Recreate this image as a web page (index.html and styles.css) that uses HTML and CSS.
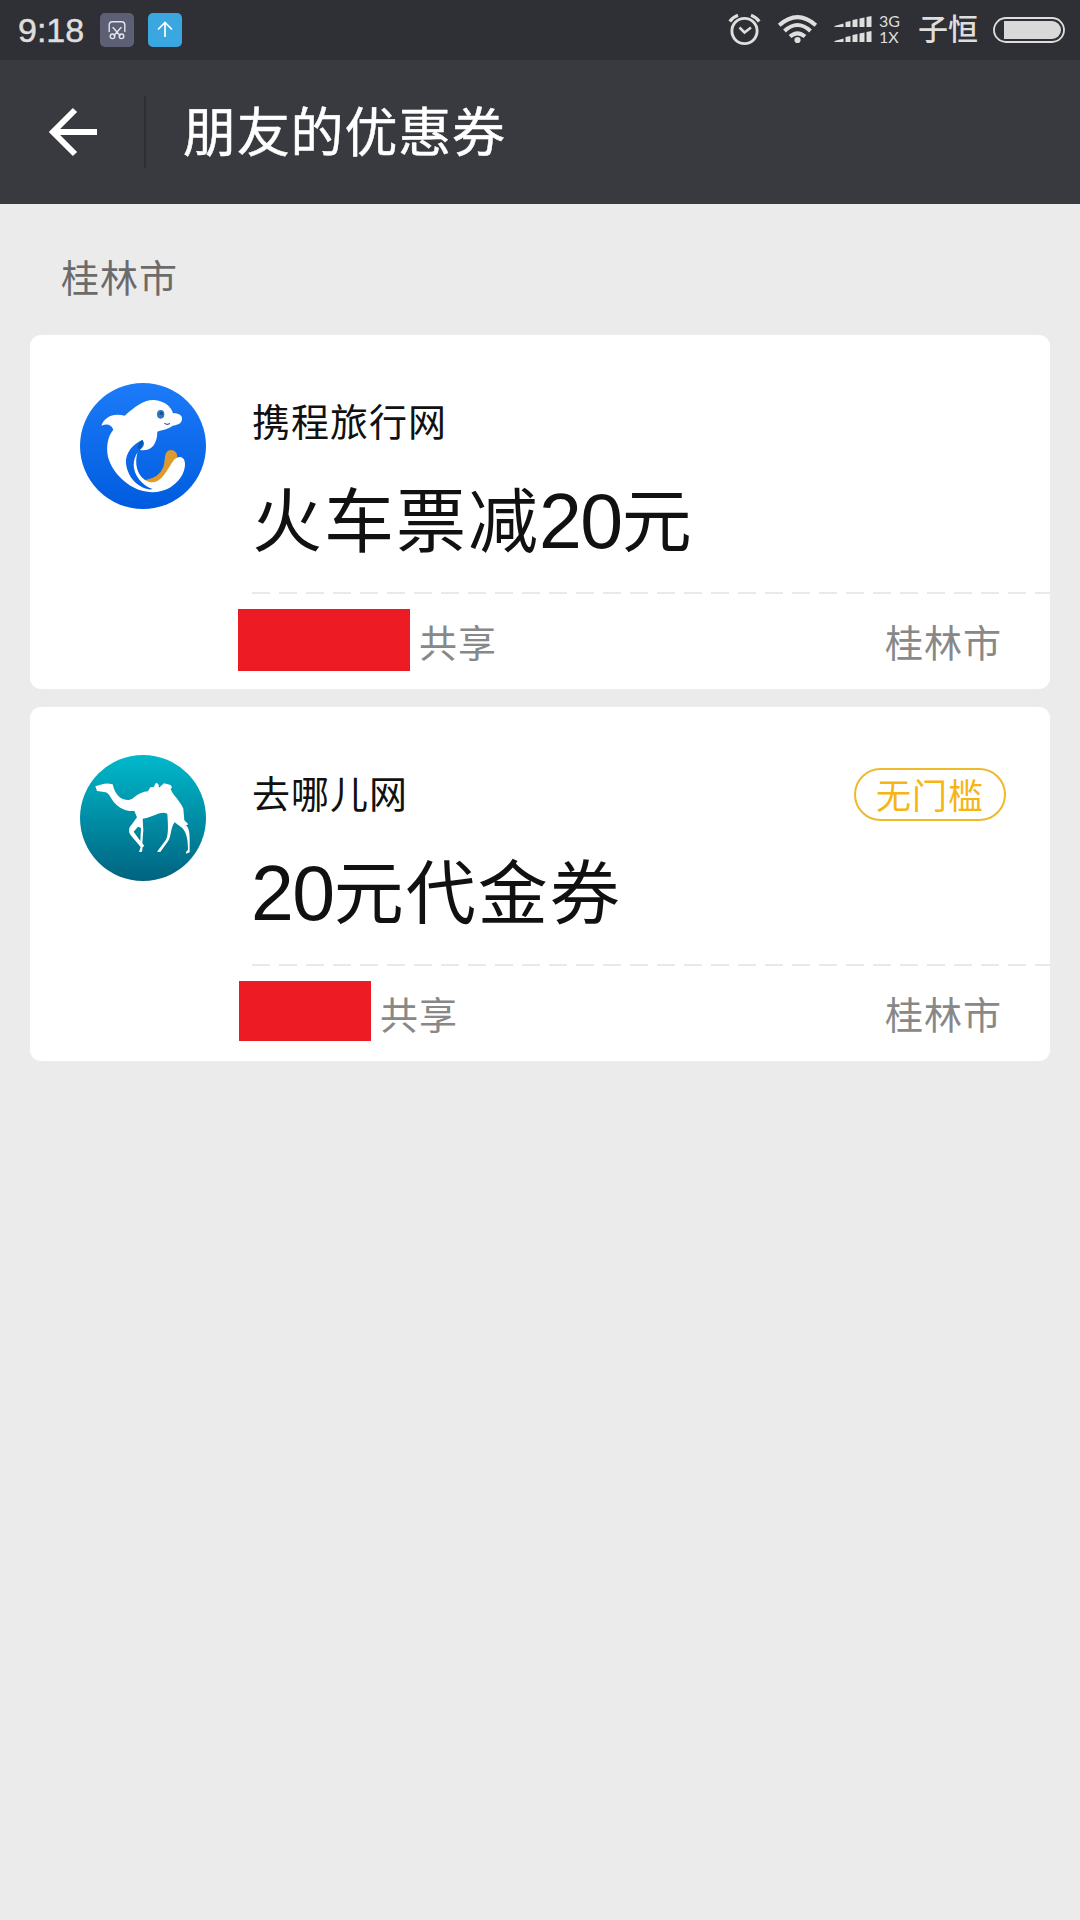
FILE: index.html
```html
<!DOCTYPE html>
<html lang="zh-CN">
<head>
<meta charset="utf-8">
<title>朋友的优惠券</title>
<link rel="stylesheet" href="styles.css">
</head>
<body>
<div class="status">
  <span class="clock">9:18</span>
  <svg class="app-icon" width="34" height="34" viewBox="0 0 34 34">
    <rect width="34" height="34" rx="5" fill="#5d6075"/>
    <g fill="none" stroke="#e4e5ea" stroke-width="1.4" stroke-linecap="round">
      <path d="M9.2 18.5V12Q9.2 8.7 12.500 8.700H21.500Q24.800 8.700 24.800 12V18.500M13 14.500L20 22.500M21 14.500L14 22.500"/>
      <circle cx="12.500" cy="23.300" r="2.300"/><circle cx="21.500" cy="23.300" r="2.300"/>
    </g>
  </svg>
  <svg class="app-icon" width="34" height="34" viewBox="0 0 34 34">
    <rect width="34" height="34" rx="5" fill="#3ba7e0"/>
    <path d="M17 24V10M10 16.500L17 9.500L24 16.500" fill="none" stroke="#fff" stroke-width="1.700"/>
  </svg>
  <svg class="signals" width="144" height="34" viewBox="0 0 144 34">
    <g fill="none" stroke="#dedede">
      <circle cx="16.500" cy="19" r="12.600" stroke-width="2.900"/>
      <path d="M11.500 15.500L16.500 20.500L23 15.500" stroke-width="2.500"/>
      <path d="M1.800 9.500Q5 5 10 3.300M31.200 9.500Q28 5 23 3.300" stroke-width="3.300"/>
      <path d="M51.200 13.300Q69.500 -2.900 87.800 13.300M56.500 19Q69.500 7 82.500 19M62 24.600Q69.500 18 77 24.600" stroke-width="4"/>
    </g>
    <g fill="#dedede">
      <circle cx="69.500" cy="28" r="3.100"/>
      <path d="M106.500 15V14L115.500 11.500V15ZM117.500 15V10L122.500 9V15ZM124.500 15V8L129.500 7V15ZM131.500 15V6.500L136.500 5.500V15ZM138.500 15V5L143.500 4V15Z"/>
      <path d="M106.500 30V29L115.500 26.500V30ZM117.500 30V25L122.500 24V30ZM124.500 30V23L129.500 22V30ZM131.500 30V21.500L136.500 20.500V30ZM138.500 30V20L143.500 19V30Z"/>
    </g>
  </svg>
  <div class="network"><span>3G</span><span>1X</span></div>
  <span class="carrier">子恒</span>
  <svg class="battery" width="72" height="26" viewBox="0 0 72 26">
    <rect x="1" y="1" width="70" height="24" rx="12" fill="none" stroke="#dedede" stroke-width="1.800"/>
    <path d="M11 4H59A9 9 0 0 1 59 22H11Z" fill="#d9d9d9"/>
  </svg>
</div>
<header class="bar">
  <svg class="back" width="50" height="50" viewBox="0 0 50 50"><path d="M48 25H5M26 3L4 25L26 47" fill="none" stroke="#fff" stroke-width="6"/></svg>
  <i class="divider"></i>
  <h1>朋友的优惠券</h1>
</header>
<main>
  <h2 class="city">桂林市</h2>
  <article class="card">
    <svg class="logo" width="126" height="126" viewBox="0 0 378 378">
      <defs><linearGradient id="blue" x2="0" y2="1"><stop stop-color="#1c7bf8"/><stop offset="1" stop-color="#005cdf"/></linearGradient></defs>
      <circle cx="189" cy="189" r="189" fill="url(#blue)"/>
      <path fill="#df9a2d" d="M194 292Q238 284 250 252C258 228 250 202 274 201Q292 204 292 222L275 280L220 320Z"/>
      <path fill="#fff" d="M64 128C72 104 98 88 134 98C164 72 190 50 222 51C252 53 274 70 279 91C296 90 307 97 306 108C305 123 291 126 278 128C264 140 247 139 232 146C232 162 228 177 220 188C210 200 195 204 179 201C192 192 196 180 187 171C158 183 136 210 138 240C140 270 159 299 187 313C202 320 211 320 218 318C186 307 161 276 161 245Q162 224 173 208C163 239 169 283 207 297C244 304 259 263 280 233C294 216 314 218 315 242C316 271 295 298 268 315C243 329 210 331 181 322C142 309 98 272 84 222C78 190 83 160 100 140C93 122 79 122 64 128Z"/>
      <path d="M187 171Q173 177 173 197Q179 196 179 201Q195 181 187 171Z" fill="#0b58b3"/>
      <ellipse cx="242" cy="94" rx="11" ry="13" fill="#2f76bd"/><circle cx="244" cy="91" r="5" fill="#174f92"/>
      <path d="M253 121Q260 127 270 122" fill="none" stroke="#173a76" stroke-width="3"/>
    </svg>
    <div class="content">
      <div class="top"><h3>携程旅行网</h3></div>
      <p class="offer">火车票减<span class="num">20</span>元</p>
      <svg class="dash" width="798" height="2" viewBox="0 0 798 2"><path d="M0 1H798" stroke="#e9e9e9" stroke-width="2" stroke-dasharray="18 9"/></svg>
      <div class="foot"><i class="mask"></i><span class="share">共享</span><span class="place">桂林市</span></div>
    </div>
  </article>
  <article class="card">
    <svg class="logo" width="126" height="126" viewBox="0 0 378 378">
      <defs><linearGradient id="teal" x2="0" y2="1"><stop stop-color="#00b9cb"/><stop offset="1" stop-color="#006380"/></linearGradient></defs>
      <circle cx="189" cy="189" r="189" fill="url(#teal)"/>
      <path fill="#fff" d="M46 94L67 88Q79 83 98 88L102 101C111 125 126 134 144 135C161 137 170 111 204 109L211 97L221 96L228 83L235 87L237 98L252 85L272 90L276 97L272 102C279 122 301 137 310 161L313 196L325 208L318 211C332 222 329 254 329 292L318 296V291L324 284C324 254 320 234 307 219L284 202C270 220 275 246 263 260L241 291L231 290L258 254C265 240 265 220 262 176C241 166 215 190 188 191L190 225L187 265L193 273L188 276L186 290L177 291L182 276L154 243Q143 230 149 217L171 187L163 168C137 170 119 160 104 144C91 130 90 117 77 112L51 108ZM174 215L161 230L181 258L183 219Z"/>
    </svg>
    <div class="content">
      <div class="top"><h3>去哪儿网</h3><span class="tag">无门槛</span></div>
      <p class="offer"><span class="num">20</span>元代金券</p>
      <svg class="dash" width="798" height="2" viewBox="0 0 798 2"><path d="M0 1H798" stroke="#e9e9e9" stroke-width="2" stroke-dasharray="18 9"/></svg>
      <div class="foot"><i class="mask mask-short"></i><span class="share">共享</span><span class="place">桂林市</span></div>
    </div>
  </article>
</main>
</body>
</html>
```
FILE: styles.css
```css
* { box-sizing: border-box; margin: 0; padding: 0; }
body {
  width: 1080px;
  min-height: 1920px;
  background: #ebebeb;
  font-family: "Liberation Sans", "Noto Sans CJK SC", sans-serif;
  color: #111;
}
h1, h2, h3 { font-weight: 400; }
svg { display: block; flex: none; }

.status {
  display: flex;
  height: 60px;
  padding-left: 18px;
  background: #2f3035;
  color: #dedede;
}
.clock { width: 82px; font-size: 34px; line-height: 61px; -webkit-text-stroke: 0.5px #dedede; }
.app-icon { margin: 13px 14px 0 0; }
.signals { margin: 12px 0 0 532px; }
.network {
  display: flex;
  flex-direction: column;
  width: 39px;
  padding-top: 13px;
  margin-left: 7px;
  font: 400 16px/16px Lato, sans-serif;
}
.carrier { width: 70px; font-size: 30px; font-weight: 500; line-height: 60px; white-space: nowrap; }
.battery { margin-top: 17px; margin-left: 5px; }

.bar {
  display: flex;
  align-items: center;
  height: 144px;
  padding-left: 49px;
  background: #393a3f;
  color: #fff;
}
.divider { width: 2px; height: 72px; margin: 0 37px 0 45px; background: #2e2f33; }
.bar h1 { padding-top: 3px; font-size: 53px; line-height: 72px; letter-spacing: 0.8px; -webkit-text-stroke: 0.5px #fff; }

main { padding: 0 30px; }
.city {
  height: 131px;
  padding: 50px 0 0 31px;
  font-size: 38px;
  line-height: 51px;
  letter-spacing: 1px;
  color: #6b6b6b;
}
.card {
  display: flex;
  height: 354px;
  margin-bottom: 18px;
  padding-left: 50px;
  border-radius: 11px;
  background: #fff;
}
.logo { margin: 48px 46px 0 0; }
.content { flex: 1; }
.top {
  display: flex;
  height: 115px;
  padding: 61px 44px 0 0;
  justify-content: space-between;
}
.top h3 { font-size: 38px; line-height: 55px; letter-spacing: 1px; }
.tag {
  width: 152px;
  height: 53px;
  border: 2px solid #ecb92f;
  border-radius: 27px;
  font-size: 35px;
  line-height: 53px;
  letter-spacing: 1px;
  text-align: center;
  color: #f5b514;
}
.offer { height: 142px; padding-top: 25px; font-size: 70px; line-height: 96px; letter-spacing: 2px; }
.num { position: relative; top: 1px; margin-left: -1px; font-size: 77px; line-height: 1; letter-spacing: -1.5px; }
.foot {
  display: flex;
  height: 95px;
  margin-left: -14px;
  padding: 15px 48px 0 0;
  font-size: 38px;
  line-height: 71px;
  letter-spacing: 1px;
  color: #888;
}
.mask { width: 172px; height: 62px; margin-right: 9px; background: #ed1c24; }
.mask-short { width: 132px; height: 60px; margin-left: 1px; }
.place { margin-left: auto; }
```
